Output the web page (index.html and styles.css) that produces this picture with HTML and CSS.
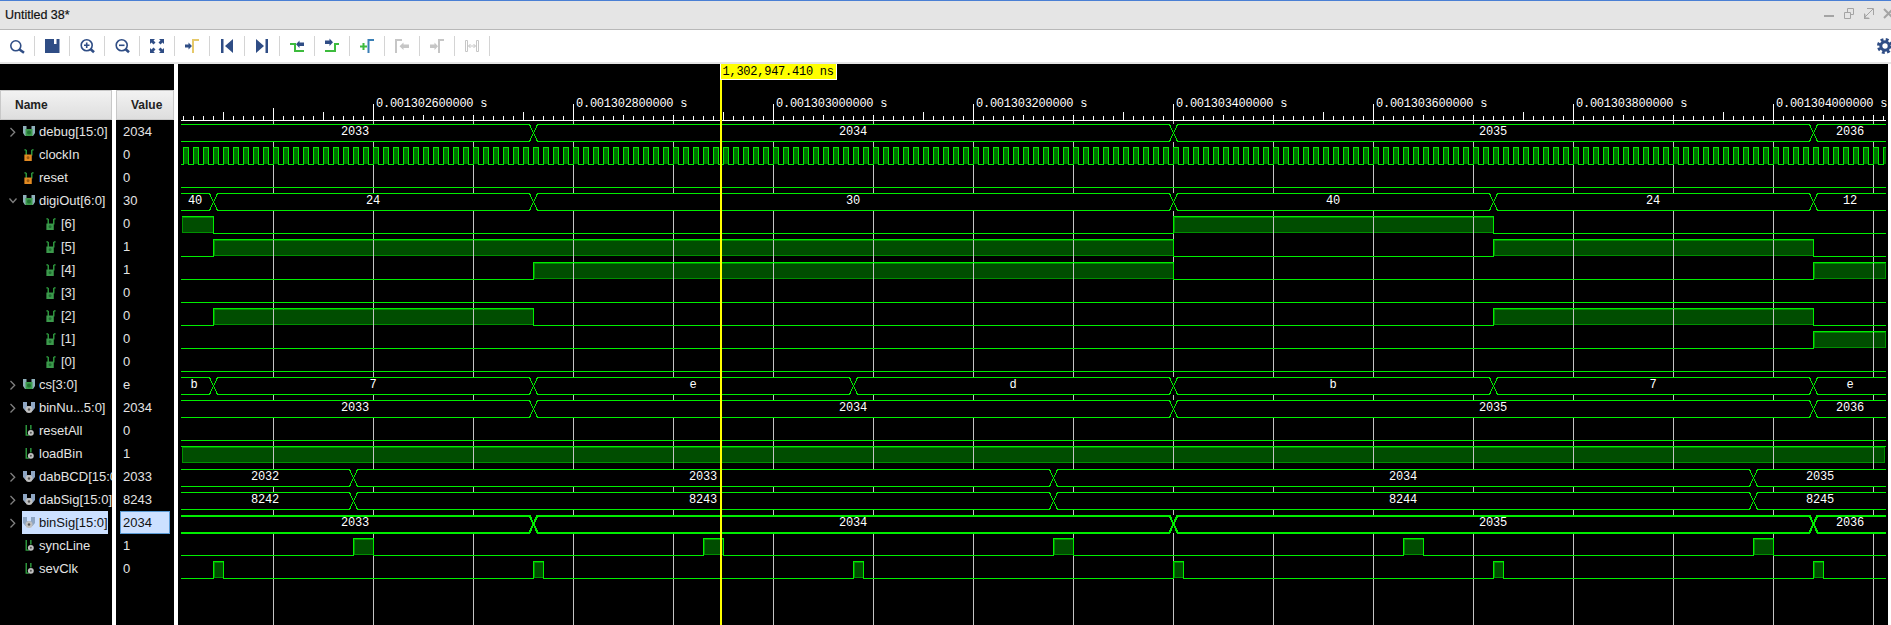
FILE: index.html
```html
<!DOCTYPE html>
<html>
<head>
    <title>Untitled 38*</title>
    <link rel="stylesheet" href="styles.css">
</head>
<body>
    <!-- shared icons for the signal list -->
    <svg class="defs">
        <symbol id="busIcon" viewBox="0 0 12 12">
            <path class="busBody" d="M0 0h3.500v3h5V0H12v7l-2 3H2L0 7z"/>
            <rect class="busBox" x="2.500" y="3" width="7" height="7"/>
            <circle class="busDot" cx="6" cy="6.500" r="2"/>
        </symbol>
        <symbol id="busGrayIcon" viewBox="0 0 12 12">
            <path class="busBodyGray" d="M0 0h4v4h4V0H12v6l-2.500 3H2.500L0 6z"/>
            <circle class="tapDot" cx="6" cy="7.500" r="3.500"/>
            <circle class="tapHole" cx="6" cy="7.500" r="1.200"/>
        </symbol>
        <symbol id="wireIcon" viewBox="0 0 12 13">
            <path class="wire" fill="none" d="M3 7V1M9 7V1M9 1H11M3 1H1"/>
            <rect class="wireBox" x="1" y="6" width="8" height="7"/>
            <circle class="wireDot" cx="5" cy="9.500" r="1.600"/>
        </symbol>
        <symbol id="tapIcon" viewBox="0 0 12 13">
            <path class="tap" fill="none" d="M3 0V11H6M8 0V5"/>
            <circle class="tapDot" cx="8" cy="8.500" r="3.200"/>
            <circle class="tapHole" cx="8" cy="8.500" r="1.100"/>
        </symbol>
        <symbol id="chevR" viewBox="0 0 12 12"><path d="M1.500 2L5.700 6.200L1.500 10.500"/></symbol>
        <symbol id="chevD" viewBox="0 0 12 12"><path d="M.5 3.500L4 7.500L7.500 3.500"/></symbol>
    </svg>

    <div class="titlebar">
        <span class="title">Untitled 38*</span>
        <div class="winBtns">
            <svg class="winBtn" viewBox="0 0 20 20"><rect x="5" y="10" width="10" height="2"/></svg>
            <svg class="winBtn" viewBox="0 0 20 20"><path class="line" d="M8.500 7.500V3.500H14.500V9.500H11M5.500 7.500H11.500V13.500H5.500Z"/></svg>
            <svg class="winBtn" viewBox="0 0 20 20"><path class="line" d="M8 3.500H14.500V10M14 4L6 12"/><path d="M5 8V14H11L9.500 12.500H6.500V9.500Z"/></svg>
            <svg class="winBtn" viewBox="0 0 20 20"><path class="line heavy" d="M5 4L14 13M14 4L5 13"/></svg>
        </div>
    </div>

    <div class="toolbar">
        <button class="tool"><svg viewBox="0 0 20 20"><circle class="ln" cx="8.800" cy="9.800" r="5"/><path class="ln thick" d="M12.500 13.500L17 16.800"/></svg></button>
        <i class="sep"></i>
        <button class="tool"><svg viewBox="0 0 20 20"><path class="solid" d="M3 3H17.500V17H3Z"/><rect class="hole" x="12" y="3" width="2.500" height="5"/></svg></button>
        <i class="sep"></i>
        <button class="tool"><svg viewBox="0 0 20 20"><circle class="ln" cx="9.700" cy="9.300" r="5.500"/><path class="ln thick" d="M13.700 13.300L17 16.300"/><path class="ln" d="M9.700 6.500V12M7 9.300H12.500"/></svg></button>
        <i class="sep"></i>
        <button class="tool"><svg viewBox="0 0 20 20"><circle class="ln" cx="9.700" cy="9.300" r="5.500"/><path class="ln thick" d="M13.700 13.300L17 16.300"/><path class="ln" d="M7 9.300H12.500"/></svg></button>
        <i class="sep"></i>
        <button class="tool"><svg viewBox="0 0 20 20"><path class="solid" d="M3 3H8L6.500 4.500L8.500 6.500L6.500 8.500L4.500 6.500L3 8ZM17 3V8L15.500 6.500L13.500 8.500L11.500 6.500L13.500 4.500L12 3ZM3 17V12L4.500 13.500L6.500 11.500L8.500 13.500L6.500 15.500L8 17ZM17 17H12L13.500 15.500L11.500 13.500L13.500 11.500L15.500 13.500L17 12Z"/></svg></button>
        <i class="sep"></i>
        <button class="tool"><svg viewBox="0 0 20 20"><path class="solid" d="M3 8.500H6.500V6.500L10 10L6.500 13.500V11.500H3Z"/><path class="yellow" d="M11 17V4H17"/></svg></button>
        <i class="sep"></i>
        <button class="tool"><svg viewBox="0 0 20 20"><path class="solid" d="M4 3H6.500V17H4ZM16 3V17L8 10Z"/></svg></button>
        <i class="sep"></i>
        <button class="tool"><svg viewBox="0 0 20 20"><path class="solid" d="M16 3H13.500V17H16ZM4 3V17L12 10Z"/></svg></button>
        <i class="sep"></i>
        <button class="tool"><svg viewBox="0 0 20 20"><path class="green" d="M3 8H8V15H17"/><path class="solid" d="M17 6.500V10H12.500V12L9 8.200L12.500 4.500V6.500Z"/></svg></button>
        <i class="sep"></i>
        <button class="tool"><svg viewBox="0 0 20 20"><path class="green" d="M3 15H13V8H17"/><path class="solid" d="M3 4.500V8H7.500V10L11 6.200L7.500 2.500V4.500Z"/></svg></button>
        <i class="sep"></i>
        <button class="tool"><svg viewBox="0 0 20 20"><path class="green" d="M3 10.500H10M6.500 7V14"/><path class="blue" d="M11.500 17V4H17"/></svg></button>
        <i class="sep"></i>
        <button class="tool"><svg viewBox="0 0 20 20"><path class="off" d="M4 17V4H10"/><path class="offFill" d="M17 8.500V12H11.500V14L7.500 10.200L11.500 6.500V8.500Z"/></svg></button>
        <i class="sep"></i>
        <button class="tool"><svg viewBox="0 0 20 20"><path class="offFill" d="M3 8.500H7.500V6.500L11 10.200L7.500 14V12H3Z"/><path class="off" d="M12 17V4H17"/></svg></button>
        <i class="sep"></i>
        <button class="tool"><svg viewBox="0 0 20 20"><path class="offThin" d="M3.500 4.500H5.500V15.500H3.500ZM14.500 4.500H16.500V15.500H14.500Z"/><path class="offThin" d="M6.500 10H13.500M8.500 8L6.500 10L8.500 12M11.500 8L13.500 10L11.500 12"/></svg></button>
        <i class="sep"></i>
        <svg class="gear" viewBox="0 0 16 16"><circle class="gearTeeth" cx="8" cy="8" r="6.500"/><circle class="gearRing" cx="8" cy="8" r="4.200"/></svg>
    </div>

    <div class="main">
        <div class="sigPanel">
            <div class="sigTop"></div>
            <div class="sigCols">
                <div class="names">
                    <div class="colHead nameHead">Name</div>
                    <div class="row"><svg class="chev"><use href="#chevR"/></svg><div class="cell"><svg class="ico grn"><use href="#busIcon"/></svg><span>debug[15:0]</span></div></div>
                    <div class="row"><span class="chev"></span><div class="cell"><svg class="ico org"><use href="#wireIcon"/></svg><span>clockIn</span></div></div>
                    <div class="row"><span class="chev"></span><div class="cell"><svg class="ico org"><use href="#wireIcon"/></svg><span>reset</span></div></div>
                    <div class="row"><svg class="chev"><use href="#chevD"/></svg><div class="cell"><svg class="ico grn"><use href="#busIcon"/></svg><span>digiOut[6:0]</span></div></div>
                    <div class="row child"><svg class="ico grn"><use href="#wireIcon"/></svg><span>[6]</span></div>
                    <div class="row child"><svg class="ico grn"><use href="#wireIcon"/></svg><span>[5]</span></div>
                    <div class="row child"><svg class="ico grn"><use href="#wireIcon"/></svg><span>[4]</span></div>
                    <div class="row child"><svg class="ico grn"><use href="#wireIcon"/></svg><span>[3]</span></div>
                    <div class="row child"><svg class="ico grn"><use href="#wireIcon"/></svg><span>[2]</span></div>
                    <div class="row child"><svg class="ico grn"><use href="#wireIcon"/></svg><span>[1]</span></div>
                    <div class="row child"><svg class="ico grn"><use href="#wireIcon"/></svg><span>[0]</span></div>
                    <div class="row"><svg class="chev"><use href="#chevR"/></svg><div class="cell"><svg class="ico grn"><use href="#busIcon"/></svg><span>cs[3:0]</span></div></div>
                    <div class="row"><svg class="chev"><use href="#chevR"/></svg><div class="cell"><svg class="ico"><use href="#busGrayIcon"/></svg><span>binNu...5:0]</span></div></div>
                    <div class="row"><span class="chev"></span><div class="cell"><svg class="ico"><use href="#tapIcon"/></svg><span>resetAll</span></div></div>
                    <div class="row"><span class="chev"></span><div class="cell"><svg class="ico"><use href="#tapIcon"/></svg><span>loadBin</span></div></div>
                    <div class="row"><svg class="chev"><use href="#chevR"/></svg><div class="cell"><svg class="ico"><use href="#busGrayIcon"/></svg><span>dabBCD[15:0]</span></div></div>
                    <div class="row"><svg class="chev"><use href="#chevR"/></svg><div class="cell"><svg class="ico"><use href="#busGrayIcon"/></svg><span>dabSig[15:0]</span></div></div>
                    <div class="row"><svg class="chev"><use href="#chevR"/></svg><div class="cell selected"><svg class="ico"><use href="#busGrayIcon"/></svg><span>binSig[15:0]</span></div></div>
                    <div class="row"><span class="chev"></span><div class="cell"><svg class="ico"><use href="#tapIcon"/></svg><span>syncLine</span></div></div>
                    <div class="row"><span class="chev"></span><div class="cell"><svg class="ico"><use href="#tapIcon"/></svg><span>sevClk</span></div></div>
                </div>
                <div class="values">
                    <div class="colHead valueHead">Value</div>
                    <div class="val">2034</div>
                    <div class="val">0</div>
                    <div class="val">0</div>
                    <div class="val">30</div>
                    <div class="val">0</div>
                    <div class="val">1</div>
                    <div class="val">1</div>
                    <div class="val">0</div>
                    <div class="val">0</div>
                    <div class="val">0</div>
                    <div class="val">0</div>
                    <div class="val">e</div>
                    <div class="val">2034</div>
                    <div class="val">0</div>
                    <div class="val">1</div>
                    <div class="val">2033</div>
                    <div class="val">8243</div>
                    <div class="val selected">2034</div>
                    <div class="val">1</div>
                    <div class="val">0</div>
                </div>
            </div>
        </div>

        <!-- waveform canvas, viewBox is in page pixels -->
        <svg class="wave" width="1710" height="561" viewBox="178 64 1710 561">
            <defs>
                <pattern id="grid" x="273" y="0" width="100" height="10" patternUnits="userSpaceOnUse"><rect class="gridLine" width="1" height="10"/></pattern>
                <pattern id="minor" x="183" y="116" width="10" height="4" patternUnits="userSpaceOnUse"><rect class="tickFill" width="1" height="4"/></pattern>
                <pattern id="clock" x="183" y="147" width="10" height="18" patternUnits="userSpaceOnUse">
                    <rect class="clockFill" x="1" y="1" width="4" height="16"/>
                    <path class="sig" d="M0 17.500H.5V.5H5.500V17.500H10"/>
                </pattern>
                <path id="busA" d="M181 .5H529.500L537.500 17.500H1169.500L1177.500 .5H1809.500L1817.500 17.500H1886M181 17.500H529.500L537.500 .5H1169.500L1177.500 17.500H1809.500L1817.500 .5H1886"/>
                <path id="busB" d="M181 .5H209.500L217.500 17.500H529.500L537.500 .5H1169.500L1177.500 17.500H1489.500L1497.500 .5H1809.500L1817.500 17.500H1886M181 17.500H209.500L217.500 .5H529.500L537.500 17.500H1169.500L1177.500 .5H1489.500L1497.500 17.500H1809.500L1817.500 .5H1886"/>
                <path id="busC" d="M181 .5H209.500L217.500 17.500H529.500L537.500 .5H849.500L857.500 17.500H1169.500L1177.500 .5H1489.500L1497.500 17.500H1809.500L1817.500 .5H1886M181 17.500H209.500L217.500 .5H529.500L537.500 17.500H849.500L857.500 .5H1169.500L1177.500 17.500H1489.500L1497.500 .5H1809.500L1817.500 17.500H1886"/>
                <path id="busD" d="M181 .5H349.500L357.500 17.500H1049.500L1057.500 .5H1749.500L1757.500 17.500H1886M181 17.500H349.500L357.500 .5H1049.500L1057.500 17.500H1749.500L1757.500 .5H1886"/>
            </defs>

            <!-- high levels sit under the grid -->
            <rect class="high" x="182.500" y="217.500" width="31" height="15"/>
            <rect class="high" x="1174.500" y="217.500" width="319" height="15"/>
            <rect class="high" x="214.500" y="240.500" width="959" height="15"/>
            <rect class="high" x="1494.500" y="240.500" width="319" height="15"/>
            <rect class="high" x="534.500" y="263.500" width="639" height="15"/>
            <rect class="high" x="1814.500" y="263.500" width="71" height="15"/>
            <rect class="high" x="214.500" y="309.500" width="319" height="15"/>
            <rect class="high" x="1494.500" y="309.500" width="319" height="15"/>
            <rect class="high" x="1814.500" y="332.500" width="71" height="15"/>
            <rect class="high" x="182.500" y="447.500" width="1702" height="15"/>
            <rect class="high" x="354.500" y="539.500" width="19" height="15"/>
            <rect class="high" x="704.500" y="539.500" width="19" height="15"/>
            <rect class="high" x="1054.500" y="539.500" width="19" height="15"/>
            <rect class="high" x="1404.500" y="539.500" width="19" height="15"/>
            <rect class="high" x="1754.500" y="539.500" width="19" height="15"/>
            <rect class="high" x="214.500" y="562.500" width="9" height="15"/>
            <rect class="high" x="534.500" y="562.500" width="9" height="15"/>
            <rect class="high" x="854.500" y="562.500" width="9" height="15"/>
            <rect class="high" x="1174.500" y="562.500" width="9" height="15"/>
            <rect class="high" x="1494.500" y="562.500" width="9" height="15"/>
            <rect class="high" x="1814.500" y="562.500" width="9" height="15"/>

            <rect fill="url(#grid)" x="273" y="120" width="1601" height="505"/>

            <!-- bus rows hide the grid -->
            <rect class="mask" x="181" y="124" width="1705" height="18"/>
            <rect class="mask" x="181" y="193" width="1705" height="18"/>
            <rect class="mask" x="181" y="377" width="1705" height="18"/>
            <rect class="mask" x="181" y="400" width="1705" height="18"/>
            <rect class="mask" x="181" y="469" width="1705" height="18"/>
            <rect class="mask" x="181" y="492" width="1705" height="18"/>
            <rect class="mask" x="181" y="515" width="1705" height="18"/>

            <!-- time ruler -->
            <rect fill="url(#minor)" x="183" y="116" width="1703" height="4"/>
            <rect class="tickFill" x="181" y="120" width="1705" height="1"/>
            <path class="tick" d="M223.500 112V120M323.500 112V120M523.500 112V120M723.500 112V120M923.500 112V120M1123.500 112V120M1323.500 112V120M1523.500 112V120M1723.500 112V120"/>
            <path class="tick" d="M423.500 115V120M623.500 115V120M823.500 115V120M1023.500 115V120M1223.500 115V120M1423.500 115V120M1623.500 115V120M1823.500 115V120"/>
            <path class="tick" d="M473.500 115V120M673.500 115V120M873.500 115V120M1073.500 115V120M1273.500 115V120M1473.500 115V120M1673.500 115V120M1873.500 115V120M273.500 108V120"/>
            <path class="tick" d="M373.500 104V120M573.500 104V120M773.500 104V120M973.500 104V120M1173.500 104V120M1373.500 104V120M1573.500 104V120M1773.500 104V120"/>
            <text x="376" y="107">0.001302600000 s</text>
            <text x="576" y="107">0.001302800000 s</text>
            <text x="776" y="107">0.001303000000 s</text>
            <text x="976" y="107">0.001303200000 s</text>
            <text x="1176" y="107">0.001303400000 s</text>
            <text x="1376" y="107">0.001303600000 s</text>
            <text x="1576" y="107">0.001303800000 s</text>
            <text x="1776" y="107">0.001304000000 s</text>

            <!-- signals -->
            <use class="bus" href="#busA" y="124"/>
            <path class="sig" d="M181 164.500H183"/>
            <rect fill="url(#clock)" x="183" y="147" width="1703" height="18"/>
            <path class="sig" d="M181 187.500H1886"/>
            <use class="bus" href="#busB" y="193"/>
            <path class="sig" d="M182 216.500H213.500V233.500H1173.500V216.500H1493.500V233.500H1886"/>
            <path class="sig" d="M181 256.500H213.500V239.500H1173.500V256.500H1493.500V239.500H1813.500V256.500H1886"/>
            <path class="sig" d="M181 279.500H533.500V262.500H1173.500V279.500H1813.500V262.500H1886"/>
            <path class="sig" d="M181 302.500H1886"/>
            <path class="sig" d="M181 325.500H213.500V308.500H533.500V325.500H1493.500V308.500H1813.500V325.500H1886"/>
            <path class="sig" d="M181 348.500H1813.500V331.500H1886"/>
            <path class="sig" d="M181 371.500H1886"/>
            <use class="bus" href="#busC" y="377"/>
            <use class="bus" href="#busA" y="400"/>
            <path class="sig" d="M181 440.500H1886"/>
            <path class="sig" d="M181 446.500H1886"/>
            <use class="bus" href="#busD" y="469"/>
            <use class="bus" href="#busD" y="492"/>
            <use class="bus busThick" href="#busA" y="515"/>
            <path class="sig" d="M181 555.500H353.500V538.500H373.500V555.500H703.500V538.500H723.500V555.500H1053.500V538.500H1073.500V555.500H1403.500V538.500H1423.500V555.500H1753.500V538.500H1773.500V555.500H1886"/>
            <path class="sig" d="M181 578.500H213.500V561.500H223.500V578.500H533.500V561.500H543.500V578.500H853.500V561.500H863.500V578.500H1173.500V561.500H1183.500V578.500H1493.500V561.500H1503.500V578.500H1813.500V561.500H1823.500V578.500H1886"/>

            <!-- bus values -->
            <g class="busText">
                <text x="355" y="135">2033</text><text x="853" y="135">2034</text><text x="1493" y="135">2035</text><text x="1850" y="135">2036</text>
                <text x="195" y="204">40</text><text x="373" y="204">24</text><text x="853" y="204">30</text><text x="1333" y="204">40</text><text x="1653" y="204">24</text><text x="1850" y="204">12</text>
                <text x="194" y="388">b</text><text x="373" y="388">7</text><text x="693" y="388">e</text><text x="1013" y="388">d</text><text x="1333" y="388">b</text><text x="1653" y="388">7</text><text x="1850" y="388">e</text>
                <text x="355" y="411">2033</text><text x="853" y="411">2034</text><text x="1493" y="411">2035</text><text x="1850" y="411">2036</text>
                <text x="265" y="480">2032</text><text x="703" y="480">2033</text><text x="1403" y="480">2034</text><text x="1820" y="480">2035</text>
                <text x="265" y="503">8242</text><text x="703" y="503">8243</text><text x="1403" y="503">8244</text><text x="1820" y="503">8245</text>
                <text x="355" y="526">2033</text><text x="853" y="526">2034</text><text x="1493" y="526">2035</text><text x="1850" y="526">2036</text>
            </g>

            <!-- cursor -->
            <rect class="tagEdge" x="720" y="64" width="117" height="16"/>
            <rect class="cursor" x="721" y="64" width="115" height="15"/>
            <rect class="cursor" x="720" y="80" width="2" height="545"/>
            <text class="tagText" x="722.500" y="74.500">1,302,947.410 ns</text>
        </svg>
    </div>
</body>
</html>
```

FILE: styles.css
```css
html, body
{
    margin: 0;
    height: 100%;
    overflow: hidden;
    background: #fff;
    font-family: "Liberation Sans", Arial, sans-serif;
}

.defs
{
    position: absolute;
    width: 0;
    height: 0;
}

/* title bar */
.titlebar
{
    box-sizing: border-box;
    height: 30px;
    display: flex;
    align-items: center;
    justify-content: space-between;
    background: #e5e5e5;
    border-top: 1px solid #4a7fd4;
    border-bottom: 1px solid #b8b8b8;
    overflow: hidden;
}

.title
{
    padding-left: 5px;
    font-size: 12.5px;
    color: #111;
    -webkit-text-stroke: 0.2px #111;
}

.winBtns
{
    display: flex;
    margin-right: -8px;
    flex: none;
}

.winBtn
{
    width: 20px;
    height: 20px;
    fill: #a4a4a4;
}

.winBtn .line
{
    fill: none;
    stroke: #a4a4a4;
    stroke-width: 1;
}

.winBtn .heavy
{
    stroke-width: 2;
}

/* toolbar */
.toolbar
{
    height: 32px;
    display: flex;
    align-items: center;
    background: #fff;
    border-bottom: 2px solid #e5e5e5;
    overflow: hidden;
}

.tool
{
    width: 34px;
    height: 32px;
    flex: none;
    padding: 0;
    border: 0;
    background: none;
    display: flex;
    align-items: center;
    justify-content: center;
}

.tool svg
{
    width: 20px;
    height: 20px;
}

.sep
{
    width: 1px;
    height: 20px;
    flex: none;
    background: #d4d4d4;
}

.ln
{
    fill: none;
    stroke: #2f4d85;
    stroke-width: 1.6;
}

.thick
{
    stroke-width: 2.6;
}

.solid
{
    fill: #2f4d85;
}

.hole
{
    fill: #fff;
}

.yellow
{
    fill: none;
    stroke: #e6c96a;
    stroke-width: 2;
}

.green
{
    fill: none;
    stroke: #3dbb3d;
    stroke-width: 2;
}

.blue
{
    fill: none;
    stroke: #3a7fb5;
    stroke-width: 2;
}

.off
{
    fill: none;
    stroke: #c6c6c6;
    stroke-width: 2;
}

.offFill
{
    fill: #c6c6c6;
}

.offThin
{
    fill: none;
    stroke: #c6c6c6;
    stroke-width: 1;
}

.gear
{
    width: 16px;
    height: 16px;
    flex: none;
    margin-left: auto;
    margin-right: -2px;
}

.gearTeeth
{
    fill: none;
    stroke: #2f4d85;
    stroke-width: 3;
    stroke-dasharray: 2.800 2.300;
}

.gearRing
{
    fill: none;
    stroke: #2f4d85;
    stroke-width: 3;
}

/* signal list + waveform */
.main
{
    height: 561px;
    display: flex;
    gap: 4px;
    padding-right: 3px;
    background: #fff;
}

.sigPanel
{
    width: 174px;
    flex: none;
    display: flex;
    flex-direction: column;
}

.sigTop
{
    height: 26px;
    background: #000;
}

.sigCols
{
    flex: 1;
    display: flex;
    gap: 4px;
    min-height: 0;
}

.names
{
    width: 112px;
    background: #000;
    overflow: hidden;
}

.values
{
    width: 58px;
    background: #000;
    overflow: hidden;
}

.colHead
{
    box-sizing: border-box;
    height: 30px;
    display: flex;
    align-items: center;
    font-size: 12px;
    font-weight: bold;
    color: #222;
    background: linear-gradient(#f2f2f2, #dedede);
    border: 1px solid #c8c8c8;
}

.nameHead
{
    padding-left: 14px;
}

.valueHead
{
    padding-left: 14px;
}

.row
{
    height: 23px;
    display: flex;
    align-items: center;
    padding-left: 9px;
    font-size: 13px;
    color: #e4e4e4;
    white-space: nowrap;
}

.child
{
    padding-left: 45px;
}

.chev
{
    width: 12px;
    height: 12px;
    flex: none;
    margin-right: 1px;
    fill: none;
    stroke: #808080;
    stroke-width: 1.300;
}

.cell
{
    display: flex;
    align-items: center;
    flex: none;
    width: 86px;
    height: 23px;
    padding-left: 1px;
    box-sizing: border-box;
}

.ico
{
    width: 12px;
    height: 12px;
    flex: none;
    margin-right: 4px;
}

.selected
{
    background: #cce0ff;
    color: #111;
}

.val
{
    box-sizing: border-box;
    height: 23px;
    width: 50px;
    margin-left: 4px;
    padding-left: 3px;
    line-height: 23px;
    font-size: 13px;
    color: #e4e4e4;
}

.val.selected
{
    padding-left: 2px;
    line-height: 21px;
    border: 1px solid #5b9bd5;
    color: #111;
}

/* icon colours, passed into the symbols with variables */
.grn
{
    --box: #3c9a4c;
    --dot: #1f7030;
}

.org
{
    --box: #e28a22;
    --dot: #9a5a10;
}

.busBody { fill: #8fb0bb; }
.busBodyGray { fill: #8ea6c4; }
.busBox, .wireBox { fill: var(--box); }
.busDot, .wireDot { fill: var(--dot); }
.wire, .tap { stroke: #2fa040; stroke-width: 1.500; }
.tapDot { fill: #c0c0c0; }
.tapHole { fill: #555; }

/* waveform */
.wave
{
    flex: none;
    background: #000;
    shape-rendering: crispEdges;
}

.wave text
{
    font-family: "Liberation Mono", monospace;
    font-size: 12px;
    letter-spacing: -0.25px;
    fill: #fff;
}

.busText text
{
    text-anchor: middle;
}

.gridLine
{
    fill: #c4c4c4;
}

.tickFill
{
    fill: #fff;
}

.tick
{
    fill: none;
    stroke: #fff;
    stroke-width: 1;
}

.mask
{
    fill: #000;
}

.sig
{
    fill: none;
    stroke: #00ee00;
    stroke-width: 1;
}

.bus
{
    fill: none;
    stroke: #00ee00;
    stroke-width: 1;
}

.busThick
{
    stroke-width: 2;
}

.high
{
    fill: #004d00;
    stroke: #009000;
    stroke-width: 1;
}

.clockFill
{
    fill: #007000;
}

.tagEdge
{
    fill: #fff;
}

.cursor
{
    fill: #ffff00;
}

.wave .tagText
{
    fill: #000;
}
```
